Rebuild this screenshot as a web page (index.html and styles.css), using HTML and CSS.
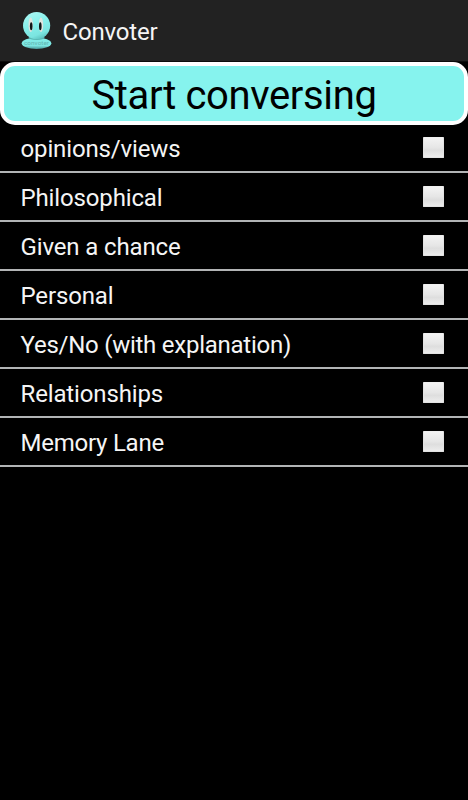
FILE: index.html
```html
<!DOCTYPE html>
<html lang="en">
<head>
<meta charset="utf-8">
<title>Convoter</title>
<link rel="stylesheet" href="styles.css">
</head>
<body>
<header class="bar">
  <svg class="logo" width="32" height="39" viewBox="0 0 32 39">
    <defs>
      <linearGradient id="head" x1=".3" y1="0" x2=".7" y2="1"><stop offset="0" stop-color="#a8f6f2"/><stop offset=".4" stop-color="#88f1ec"/><stop offset=".8" stop-color="#7be5e0"/><stop offset="1" stop-color="#5abfbc"/></linearGradient>
      <linearGradient id="base" x1="0" y1="0" x2="0" y2="1"><stop offset="0" stop-color="#83eee9"/><stop offset=".7" stop-color="#7ce6e1"/><stop offset="1" stop-color="#4b9c9c"/></linearGradient>
    </defs>
    <ellipse cx="15.5" cy="31.2" rx="14.8" ry="5.7" fill="url(#base)"/>
    <ellipse cx="15.6" cy="25.6" rx="8" ry="2.4" fill="#57b5b2"/>
    <circle cx="15.6" cy="13.6" r="13.6" fill="url(#head)"/>
    <ellipse cx="9.7" cy="12.8" rx="2.2" ry="7.2" fill="#dfe4de"/>
    <ellipse cx="20" cy="12.8" rx="2.2" ry="7.2" fill="#dfe4de"/>
    <ellipse cx="10.2" cy="14.2" rx="1.3" ry="4" fill="#101818"/>
    <ellipse cx="19.3" cy="14.2" rx="1.3" ry="4" fill="#101818"/>
    <text class="logo-text" x="15.5" y="32.8" text-anchor="middle" textLength="25" lengthAdjust="spacingAndGlyphs">convoter</text>
  </svg>
  <h1 class="title">Convoter</h1>
</header>
<button class="start"><span class="start-label">Start conversing</span></button>
<main class="list">
  <label class="row"><span>opinions/views</span><input type="checkbox" class="check"></label>
  <label class="row"><span>Philosophical</span><input type="checkbox" class="check"></label>
  <label class="row"><span>Given a chance</span><input type="checkbox" class="check"></label>
  <label class="row"><span>Personal</span><input type="checkbox" class="check"></label>
  <label class="row"><span class="long">Yes/No (with explanation)</span><input type="checkbox" class="check"></label>
  <label class="row"><span>Relationships</span><input type="checkbox" class="check"></label>
  <label class="row"><span class="wide">Memory Lane</span><input type="checkbox" class="check"></label>
</main>
</body>
</html>
```
FILE: styles.css
```css
* { box-sizing: border-box; }
body {
  margin: 0;
  min-height: 800px;
  background: #000;
  color: #f5f5f5;
  font-family: Roboto, sans-serif;
}
.bar {
  display: flex;
  align-items: flex-start;
  height: 62px;
  padding: 12px 0 0 21px;
  background: #222;
  border-bottom: 1px solid #0c0c0c;
}
.logo { display: block; flex: none; }
.logo-text { font-size: 5px; fill: #62b5b1; }
.title {
  margin: 0 0 0 9.5px;
  font-size: 24px;
  line-height: 40px;
  font-weight: 400;
  letter-spacing: -0.18px;
}
.start {
  display: flex;
  justify-content: center;
  width: 100%;
  height: 63px;
  padding: 0;
  margin-bottom: -1px;
  border: 4px solid #fff;
  border-radius: 15px;
  background: #86f3ee;
  color: #000;
  font: 400 40px/59px Roboto, sans-serif;
  letter-spacing: -0.35px;
}
.start-label { white-space: nowrap; }
.row {
  display: flex;
  justify-content: space-between;
  height: 49px;
  padding: 0 24px 0 20.5px;
  border-bottom: 2px solid #b2b4b5;
  font-size: 24px;
  line-height: 50px;
  letter-spacing: -0.14px;
  white-space: nowrap;
}
.long { letter-spacing: -0.25px; }
.wide { letter-spacing: -0.24px; }
.check {
  appearance: none;
  width: 21px;
  height: 21px;
  margin: 13px 0 0;
  border: 1px solid #e2e2e2;
  border-top-color: #f0f0f0;
  border-radius: 1px;
  background: linear-gradient(#f3f3f3, #e6e6e6 50%, #dedede 65%, #ececec);
}
```
